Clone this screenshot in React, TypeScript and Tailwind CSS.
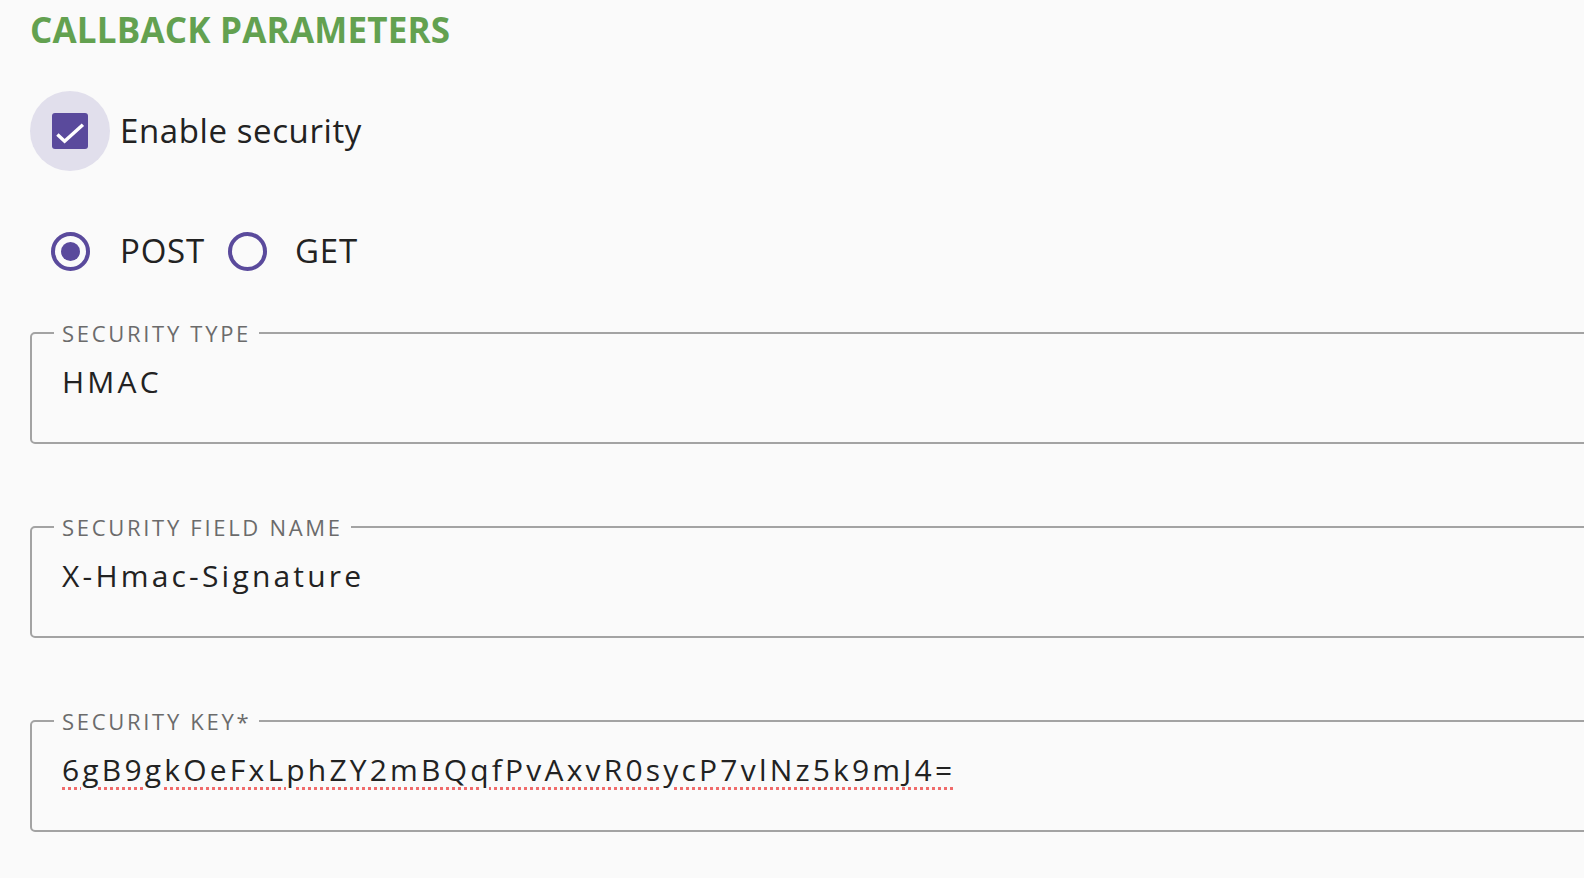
import React from 'react';

const font = { fontFamily: '"Open Sans", "Liberation Sans", sans-serif' };

const Field: React.FC<{ label: string; value: string; spell?: boolean }> = ({ label, value, spell }) => (
  <fieldset className="w-[1620px] border-2 border-[#a3a3a3] rounded-[5px] pl-[22px] m-0 min-w-0">
    <legend className="px-[8px] text-[22px] leading-[22px] text-[#6b6b6b] tracking-[2.7px]">{label}</legend>
    <div className="h-[98px] pl-[8px] pt-[18px]">
      <span
        className={
          'text-[30px] leading-[40px] text-[#222] tracking-[3.2px] ' +
          (spell ? 'underline decoration-dotted decoration-[#f06b6b] decoration-[3px] underline-offset-[6px]' : '')
        }
      >
        {value}
      </span>
    </div>
  </fieldset>
);

const Radio: React.FC<{ checked?: boolean }> = ({ checked }) => (
  <div className="w-[80px] h-[80px] flex items-center justify-center">
    <div className="w-[39px] h-[39px] rounded-full border-[4px] border-[#5a4a9c] flex items-center justify-center">
      {checked && <div className="w-[19px] h-[19px] rounded-full bg-[#5a4a9c]" />}
    </div>
  </div>
);

export default function App() {
  return (
    <div className="h-[878px] w-full overflow-hidden bg-[#fafafa] pl-[30px]" style={font}>
      <h2 className="pt-[9px] text-[35px] leading-[42px] font-bold text-[#63a150] tracking-[0.2px]">
        CALLBACK PARAMETERS
      </h2>

      <div className="mt-[40px] flex items-center">
        <div className="w-[80px] h-[80px] rounded-full bg-[#e1dfec] flex items-center justify-center">
          <div className="w-[36px] h-[36px] rounded-[3px] bg-[#5a4a9c]">
            <svg width="36" height="36" viewBox="0 0 24 24" fill="none">
              <path d="M3.6 14.4L8.4 18.8L20.6 7.8" stroke="#fff" strokeWidth="2.3" />
            </svg>
          </div>
        </div>
        <span className="ml-[10px] text-[33px] text-[#222] tracking-[0.6px]">Enable security</span>
      </div>

      <div className="mt-[40px] flex items-center">
        <Radio checked />
        <span className="ml-[10px] mr-[2px] text-[33px] text-[#222] tracking-[0.8px]">POST</span>
        <Radio />
        <span className="ml-[8px] text-[33px] text-[#222] tracking-[0.8px]">GET</span>
      </div>

      <div className="mt-[31px] flex flex-col gap-[72px]">
        <Field label="SECURITY TYPE" value="HMAC" />
        <Field label="SECURITY FIELD NAME" value="X-Hmac-Signature" />
        <Field label="SECURITY KEY*" value="6gB9gkOeFxLphZY2mBQqfPvAxvR0sycP7vlNz5k9mJ4=" spell />
      </div>
    </div>
  );
}
